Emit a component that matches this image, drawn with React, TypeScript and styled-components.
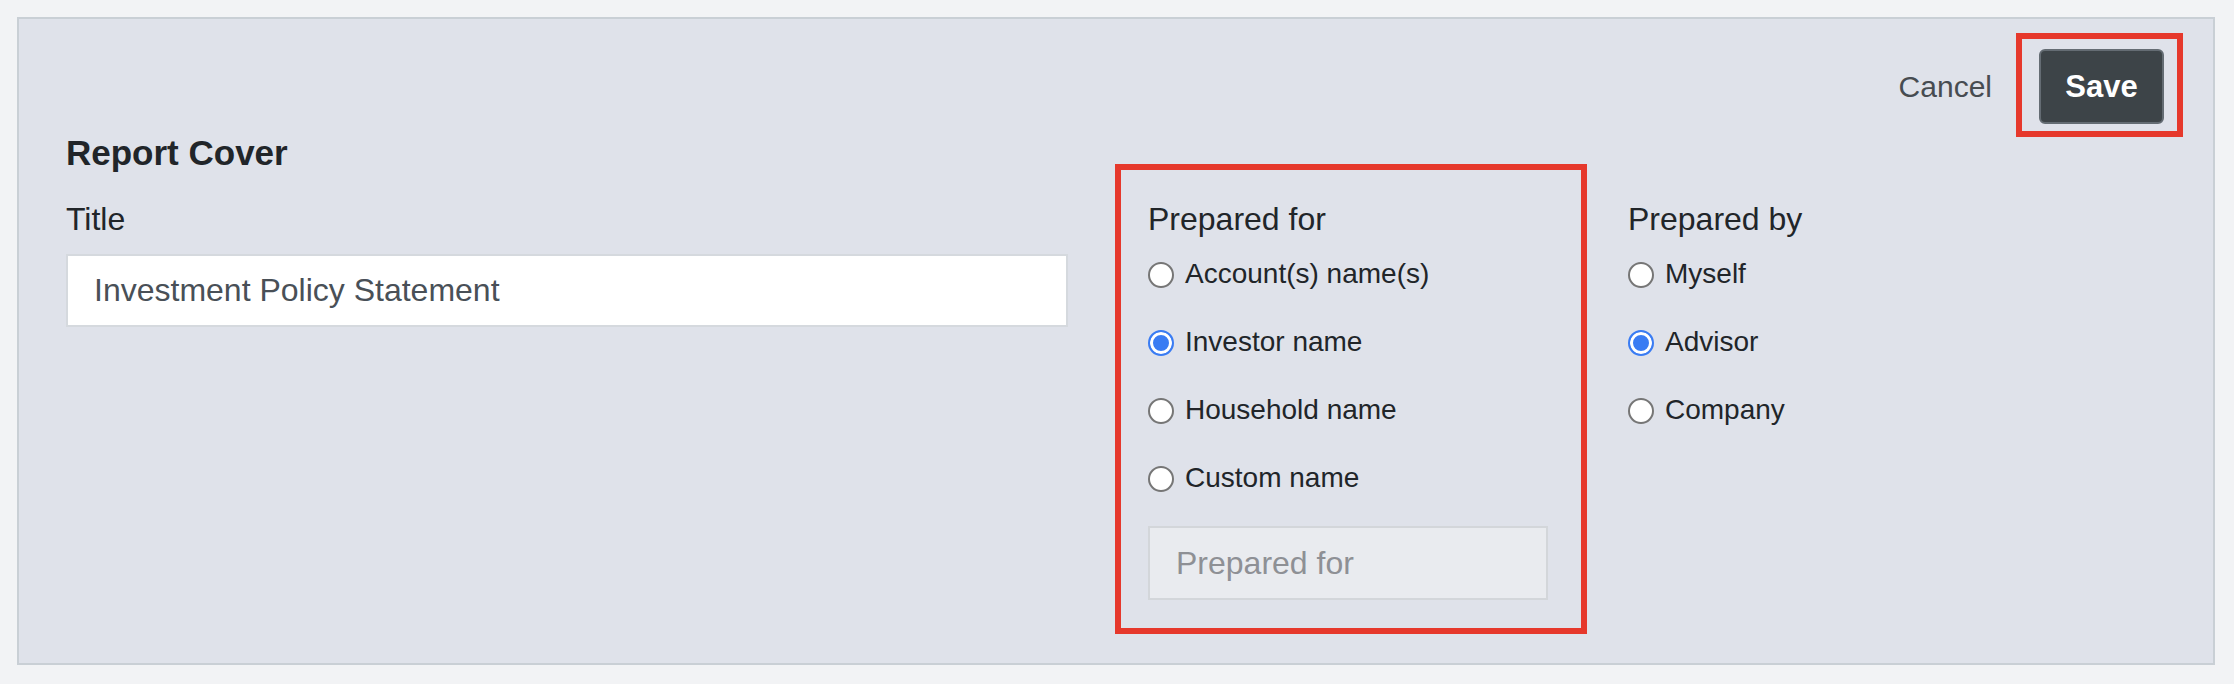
import { FC } from "react";
import styled, { createGlobalStyle } from "styled-components";

const GlobalStyle = createGlobalStyle`
    body {
        margin: 0;
        background-color: #f2f3f5;
        font-family: "Liberation Sans", Arial, sans-serif;
        color: #212529;
    }
`;

const Panel = styled.section`
    margin: 17px 19px 0 17px;
    border: 2px solid #c9cfd5;
    background-color: #dfe2ea;
    padding: 30px 49px 63px 47px;
`;

const Actions = styled.div`
    display: flex;
    justify-content: flex-end;
    align-items: center;
    gap: 47px;
`;

const CancelLink = styled.span`
    font-size: 30px;
    font-weight: 300;
    color: #474c51;
    line-height: 36px;
`;

// red annotation frame drawn over an element
const Marked = styled.div<{ $inset: string }>`
    position: relative;
    &::after {
        content: "";
        position: absolute;
        inset: ${p => p.$inset};
        border: 6px solid #e6382c;
        pointer-events: none;
    }
`;

const SaveButton = styled.button`
    display: block;
    width: 125px;
    height: 75px;
    background-color: #3d4448;
    border: 2px solid #646c73;
    border-radius: 6px;
    color: #fff;
    font-family: "Liberation Sans", Arial, sans-serif;
    font-size: 31px;
    font-weight: bold;
    padding: 0;
`;

const Heading = styled.h2`
    margin: 9px 0 27px;
    font-size: 35px;
    line-height: 40px;
    font-weight: bold;
    color: #212529;
`;

const Columns = styled.div`
    display: grid;
    grid-template-columns: 1002px 400px 1fr;
    column-gap: 80px;
    align-items: start;
`;

const Column = styled.div`
    display: flex;
    flex-direction: column;
`;

const Label = styled.div`
    font-size: 32px;
    line-height: 38px;
`;

const TextInput = styled.input<{ $muted?: boolean }>`
    box-sizing: border-box;
    width: 100%;
    height: ${p => (p.$muted ? "74px" : "73px")};
    margin-top: ${p => (p.$muted ? "29px" : "16px")};
    padding: 0 26px;
    border: 2px solid ${p => (p.$muted ? "#d3d6da" : "#d5d9de")};
    background-color: ${p => (p.$muted ? "#e9ebef" : "#fff")};
    font-family: "Liberation Sans", Arial, sans-serif;
    font-size: 32px;
    color: #495057;
    outline: none;
    &::placeholder {
        color: #8e9095;
    }
`;

const Options = styled.div`
    display: flex;
    flex-direction: column;
    gap: 30px;
    margin-top: 17px;
`;

const Option = styled.label`
    display: flex;
    align-items: center;
    gap: 11px;
    height: 38px;
    font-size: 28px;
    line-height: 38px;
`;

const Radio = styled.input.attrs({ type: "radio" })`
    appearance: none;
    box-sizing: border-box;
    width: 26px;
    height: 26px;
    margin: 1px 0 0;
    border-radius: 50%;
    border: 2px solid #767676;
    background-color: #fff;
    flex-shrink: 0;
    &:checked {
        border-color: #3a7cf3;
        background-color: #3a7cf3;
        box-shadow: inset 0 0 0 3px #fff;
    }
`;

type Group = {
    name: string;
    title: string;
    options: string[];
    selected: string;
};

const RadioGroup: FC<Group> = ({ name, title, options, selected }) => (
    <>
        <Label>{title}</Label>
        <Options>
            {options.map(o => (
                <Option key={o}>
                    <Radio name={name} defaultChecked={o === selected} />
                    {o}
                </Option>
            ))}
        </Options>
    </>
);

const App: FC = () => {
    return (
        <>
            <GlobalStyle />
            <Panel>
                <Actions>
                    <CancelLink>Cancel</CancelLink>
                    <Marked $inset="-16px -19px -13px -23px">
                        <SaveButton>Save</SaveButton>
                    </Marked>
                </Actions>
                <Heading>Report Cover</Heading>
                <Columns>
                    <Column>
                        <Label>Title</Label>
                        <TextInput defaultValue="Investment Policy Statement" />
                    </Column>
                    <Marked $inset="-36px -39px -34px -33px">
                        <Column>
                            <RadioGroup
                                name="for"
                                title="Prepared for"
                                options={["Account(s) name(s)", "Investor name", "Household name", "Custom name"]}
                                selected="Investor name"
                            />
                            <TextInput $muted placeholder="Prepared for" />
                        </Column>
                    </Marked>
                    <Column>
                        <RadioGroup
                            name="by"
                            title="Prepared by"
                            options={["Myself", "Advisor", "Company"]}
                            selected="Advisor"
                        />
                    </Column>
                </Columns>
            </Panel>
        </>
    );
};

export default App;
